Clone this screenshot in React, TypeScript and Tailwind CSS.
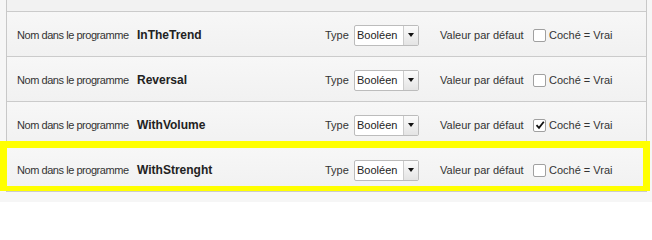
import React from "react";

type Param = {
  name: string;
  checked: boolean;
};

const params: Param[] = [
  { name: "InTheTrend", checked: false },
  { name: "Reversal", checked: false },
  { name: "WithVolume", checked: true },
  { name: "WithStrenght", checked: false },
];

function TypeSelect() {
  return (
    <div className="flex h-[21px] w-[65px] items-stretch rounded-[2px] border border-[#bcbcbc] bg-white">
      <span className="flex flex-1 items-center pl-[2px] text-[11px] text-[#222]">
        Booléen
      </span>
      <span className="flex w-[15px] items-center justify-center border-l border-[#cccccc] bg-gradient-to-b from-[#fbfbfb] to-[#e4e4e4]">
        <span className="h-0 w-0 border-x-[3.5px] border-t-[4px] border-x-transparent border-t-[#111]" />
      </span>
    </div>
  );
}

function Checkbox({ checked }: { checked: boolean }) {
  return (
    <span className="flex h-[13px] w-[13px] items-center justify-center rounded-[2px] border border-[#a0a0a0] bg-white">
      {checked && (
        <svg width="10" height="10" viewBox="0 0 10 10">
          <path
            d="M1.5 5.2 L4 7.8 L8.8 1.8"
            fill="none"
            stroke="#111"
            strokeWidth="1.8"
          />
        </svg>
      )}
    </span>
  );
}

function ParamRow({ param }: { param: Param }) {
  return (
    <div className="flex h-[45px] items-center whitespace-nowrap border-b border-[#cbcbcb] bg-gradient-to-b from-[#f7f7f7] to-[#f1f1f1] pt-[2px] text-[11px] text-[#333]">
      <span className="ml-[10px] w-[120px] tracking-[-0.45px]">
        Nom dans le programme
      </span>
      <span className="w-[188px] text-[12px] font-bold text-[#222]">
        {param.name}
      </span>
      <span className="w-[29px]">Type</span>
      <TypeSelect />
      <span className="ml-[21px] w-[93px]">Valeur par défaut</span>
      <Checkbox checked={param.checked} />
      <span className="ml-[3px]">Coché = Vrai</span>
    </div>
  );
}

export default function App() {
  return (
    <div
      className="relative h-[202px] w-[652px] overflow-hidden bg-[#f6f6f6]"
      style={{ fontFamily: '"Liberation Sans", Arial, sans-serif' }}
    >
      <div className="ml-[6px] w-[641px] border-x border-[#c8c8c8]">
        <div className="h-[12px] border-b border-[#cbcbcb] bg-[#f2f2f2]" />
        {params.map((p) => (
          <ParamRow key={p.name} param={p} />
        ))}
      </div>
      {/* highlight around the last parameter */}
      <div className="pointer-events-none absolute left-0 top-[141px] h-[50px] w-[650px] border-x-[7px] border-b-[5px] border-t-[7px] border-[#ffff00]" />
    </div>
  );
}
